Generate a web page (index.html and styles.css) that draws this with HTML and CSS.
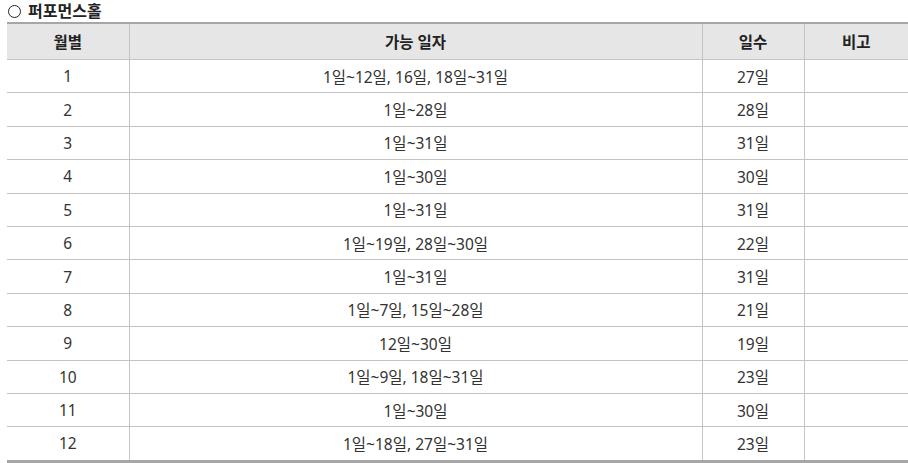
FILE: index.html
```html
<!DOCTYPE html>
<html lang="ko">
<head>
<meta charset="utf-8">
<link rel="stylesheet" href="styles.css">
</head>
<body>
<div class="page">
  <h3 class="title"><span class="circle"></span>퍼포먼스홀</h3>
  <table class="tbl">
    <colgroup>
      <col class="c1"><col class="c2"><col class="c3"><col class="c4">
    </colgroup>
    <thead>
      <tr><th>월별</th><th>가능 일자</th><th>일수</th><th>비고</th></tr>
    </thead>
    <tbody>
      <tr><td>1</td><td>1일~12일, 16일, 18일~31일</td><td>27일</td><td></td></tr>
      <tr><td>2</td><td>1일~28일</td><td>28일</td><td></td></tr>
      <tr><td>3</td><td>1일~31일</td><td>31일</td><td></td></tr>
      <tr><td>4</td><td>1일~30일</td><td>30일</td><td></td></tr>
      <tr><td>5</td><td>1일~31일</td><td>31일</td><td></td></tr>
      <tr><td>6</td><td>1일~19일, 28일~30일</td><td>22일</td><td></td></tr>
      <tr><td>7</td><td>1일~31일</td><td>31일</td><td></td></tr>
      <tr><td>8</td><td>1일~7일, 15일~28일</td><td>21일</td><td></td></tr>
      <tr><td>9</td><td>12일~30일</td><td>19일</td><td></td></tr>
      <tr><td>10</td><td>1일~9일, 18일~31일</td><td>23일</td><td></td></tr>
      <tr><td>11</td><td>1일~30일</td><td>30일</td><td></td></tr>
      <tr><td>12</td><td>1일~18일, 27일~31일</td><td>23일</td><td></td></tr>
    </tbody>
  </table>
</div>
</body>
</html>
```
FILE: styles.css
```css
html, body {
  margin: 0;
  padding: 0;
  background: #ffffff;
}
body {
  font-family: "Noto Sans", "Noto Sans CJK KR", sans-serif;
  color: #333333;
}
.page {
  padding: 0 0 0 7px;
}
.title {
  margin: 0;
  height: 22px;
  display: flex;
  align-items: center;
  gap: 7px;
  padding-left: 1px;
  font-size: 16px;
  font-weight: bold;
  color: #222222;
  line-height: 20px;
}
.circle {
  border: 1.5px solid #222222;
  border-radius: 50%;
  box-sizing: border-box;
  width: 13px;
  height: 13px;
}
.tbl {
  width: 901px;
  border-collapse: collapse;
  table-layout: fixed;
  border-top: 2px solid #a6a6a6;
  border-bottom: 3px solid #a6a6a6;
}
.c1 { width: 122px; }
.c2 { width: 573px; }
.c3 { width: 102px; }
.c4 { width: 104px; }
.tbl th {
  background: #e6e6e6;
  height: 35px;
  padding: 0;
  font-size: 15.5px;
  font-weight: bold;
  color: #222222;
  text-align: center;
  border-left: 1px solid #c4c4c4;
  border-bottom: 1px solid #c4c4c4;
}
.tbl td {
  height: 32.4px;
  padding: 0;
  font-size: 15.5px;
  text-align: center;
  color: #333333;
  border-left: 1px solid #c4c4c4;
  border-top: 1px solid #c4c4c4;
}
.tbl th:first-child, .tbl td:first-child {
  border-left: none;
}
```
